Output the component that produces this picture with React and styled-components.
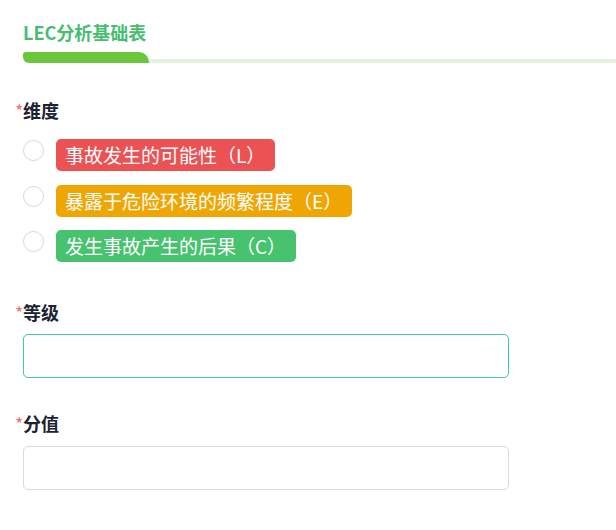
import styled, { createGlobalStyle } from "styled-components";

const GlobalStyle = createGlobalStyle`
    body {
        margin: 0;
        background: #ffffff;
        font-family: "Noto Sans CJK SC", "Noto Sans", sans-serif;
    }
`;

const Page = styled.div`
    width: 616px;
    min-height: 530px;
    background: #ffffff;
`;

const Header = styled.div`
    padding: 19px 0 0 23px;
`;

const Title = styled.h1`
    margin: 0;
    font-size: 18px;
    line-height: 26px;
    font-weight: 700;
    color: #47bd72;
`;

const TabLine = styled.div`
    display: flex;
    align-items: flex-end;
    margin: 7px 0 0 23px;
`;

const ActiveBar = styled.div`
    width: 126px;
    height: 11px;
    background: #6ac63b;
    border-radius: 3px 10px 0 6px;
`;

const Track = styled.div`
    flex: 1;
    height: 4px;
    background: #e2f4d9;
`;

const Form = styled.div`
    padding: 34px 0 0 23px;
`;

const Field = styled.div`
    margin-top: ${(props) => props.$gap}px;
`;

const Label = styled.div`
    display: flex;
    align-items: baseline;
    margin-left: -8px;
    font-size: 18px;
    line-height: 26px;
    font-weight: 700;
    color: #1b2232;
`;

const Star = styled.span`
    width: 8px;
    font-size: 18px;
    font-weight: 400;
    color: #f07070;
`;

const OptionList = styled.div`
    display: flex;
    flex-direction: column;
    gap: 13.5px;
    margin-top: 16px;
`;

const Option = styled.label`
    display: flex;
    align-items: flex-start;
    gap: 12px;
    cursor: pointer;
`;

const Radio = styled.span`
    box-sizing: border-box;
    width: 21px;
    height: 21px;
    margin-top: 1px;
    border: 1px solid #d6d6d6;
    border-radius: 50%;
    background: #ffffff;
`;

const Tag = styled.span`
    height: 32px;
    padding: 0 10px 0 9px;
    border-radius: 5px;
    background: ${(props) => props.$color};
    color: #ffffff;
    font-size: 19px;
    line-height: 32px;
    white-space: nowrap;
`;

const Input = styled.input`
    display: block;
    box-sizing: border-box;
    width: 486px;
    height: 44px;
    margin-top: ${(props) => props.$top}px;
    padding: 0 12px;
    border: 1px solid ${(props) => (props.$active ? "#42c9aa" : "#dadada")};
    border-radius: 5px;
    outline: none;
    font-size: 16px;
    font-family: inherit;
`;

const options = [
    { text: "事故发生的可能性（L）", color: "#ec5253" },
    { text: "暴露于危险环境的频繁程度（E）", color: "#f0a602" },
    { text: "发生事故产生的后果（C）", color: "#47c26f" },
];

export default function App() {
    return (
        <Page>
            <GlobalStyle />
            <Header>
                <Title>LEC分析基础表</Title>
            </Header>
            <TabLine>
                <ActiveBar />
                <Track />
            </TabLine>
            <Form>
                <Field $gap={0}>
                    <Label><Star>*</Star>维度</Label>
                    <OptionList>
                        {options.map((opt) => (
                            <Option key={opt.text}>
                                <Radio />
                                <Tag $color={opt.color}>{opt.text}</Tag>
                            </Option>
                        ))}
                    </OptionList>
                </Field>
                <Field $gap={37}>
                    <Label><Star>*</Star>等级</Label>
                    <Input $active $top={9} />
                </Field>
                <Field $gap={32}>
                    <Label><Star>*</Star>分值</Label>
                    <Input $top={10} />
                </Field>
            </Form>
        </Page>
    );
}
